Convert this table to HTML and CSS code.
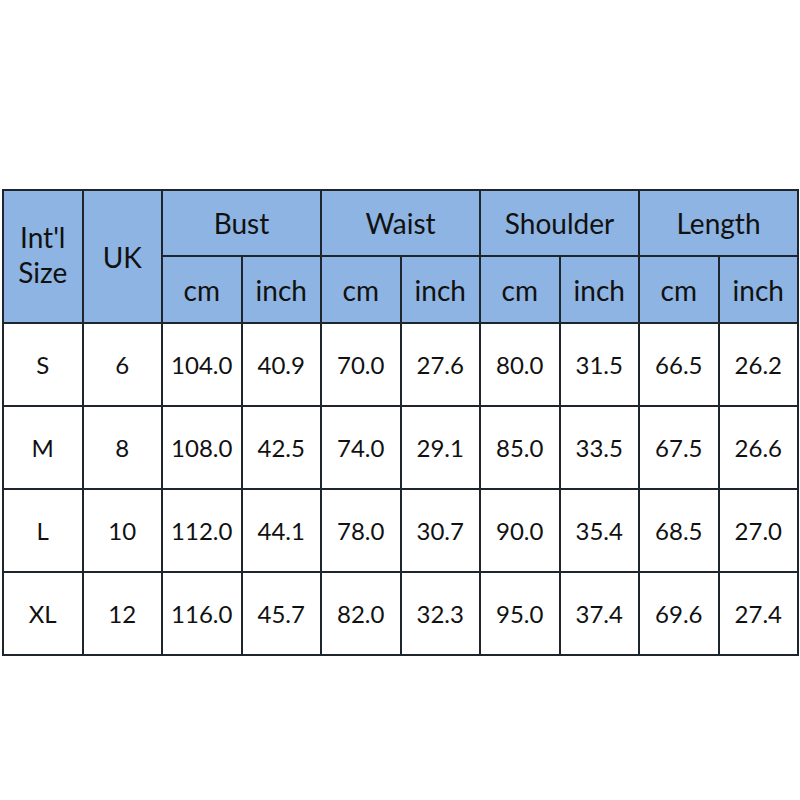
FILE: index.html
```html
<!DOCTYPE html>
<html>
<head>
<meta charset="utf-8">
<link rel="stylesheet" href="styles.css">
</head>
<body>
<div class="wrap">
<table class="chart">
  <colgroup>
    <col><col><col><col><col><col><col><col><col><col>
  </colgroup>
  <thead>
    <tr class="h1">
      <th rowspan="2" class="intl">Int'l<br>Size</th>
      <th rowspan="2">UK</th>
      <th colspan="2">Bust</th>
      <th colspan="2">Waist</th>
      <th colspan="2">Shoulder</th>
      <th colspan="2">Length</th>
    </tr>
    <tr class="h2">
      <th>cm</th><th>inch</th><th>cm</th><th>inch</th><th>cm</th><th>inch</th><th>cm</th><th>inch</th>
    </tr>
  </thead>
  <tbody>
    <tr><td>S</td><td>6</td><td>104.0</td><td>40.9</td><td>70.0</td><td>27.6</td><td>80.0</td><td>31.5</td><td>66.5</td><td>26.2</td></tr>
    <tr><td>M</td><td>8</td><td>108.0</td><td>42.5</td><td>74.0</td><td>29.1</td><td>85.0</td><td>33.5</td><td>67.5</td><td>26.6</td></tr>
    <tr><td>L</td><td>10</td><td>112.0</td><td>44.1</td><td>78.0</td><td>30.7</td><td>90.0</td><td>35.4</td><td>68.5</td><td>27.0</td></tr>
    <tr><td>XL</td><td>12</td><td>116.0</td><td>45.7</td><td>82.0</td><td>32.3</td><td>95.0</td><td>37.4</td><td>69.6</td><td>27.4</td></tr>
  </tbody>
</table>
</div>
</body>
</html>
```

FILE: styles.css
```css
html, body {
  margin: 0;
  padding: 0;
  background: #ffffff;
}
.wrap {
  padding: 189px 0 0 2px;
}
.chart {
  border-collapse: collapse;
  table-layout: fixed;
  width: 797px;
  font-family: Lato, "Open Sans", sans-serif;
  color: #111111;
}
.chart col {
  width: 79.5px;
}
.chart th, .chart td {
  border: 2px solid #1e252c;
  text-align: center;
  vertical-align: middle;
  padding: 0;
}
.chart th {
  background: #8db4e2;
  font-weight: normal;
  font-size: 28px;
}
.chart .h1 th {
  height: 64px;
}
.chart .h2 th {
  height: 65px;
}
.chart .intl {
  line-height: 35px;
  padding-bottom: 4px;
}
.chart td {
  height: 81px;
  font-size: 24px;
}
```
